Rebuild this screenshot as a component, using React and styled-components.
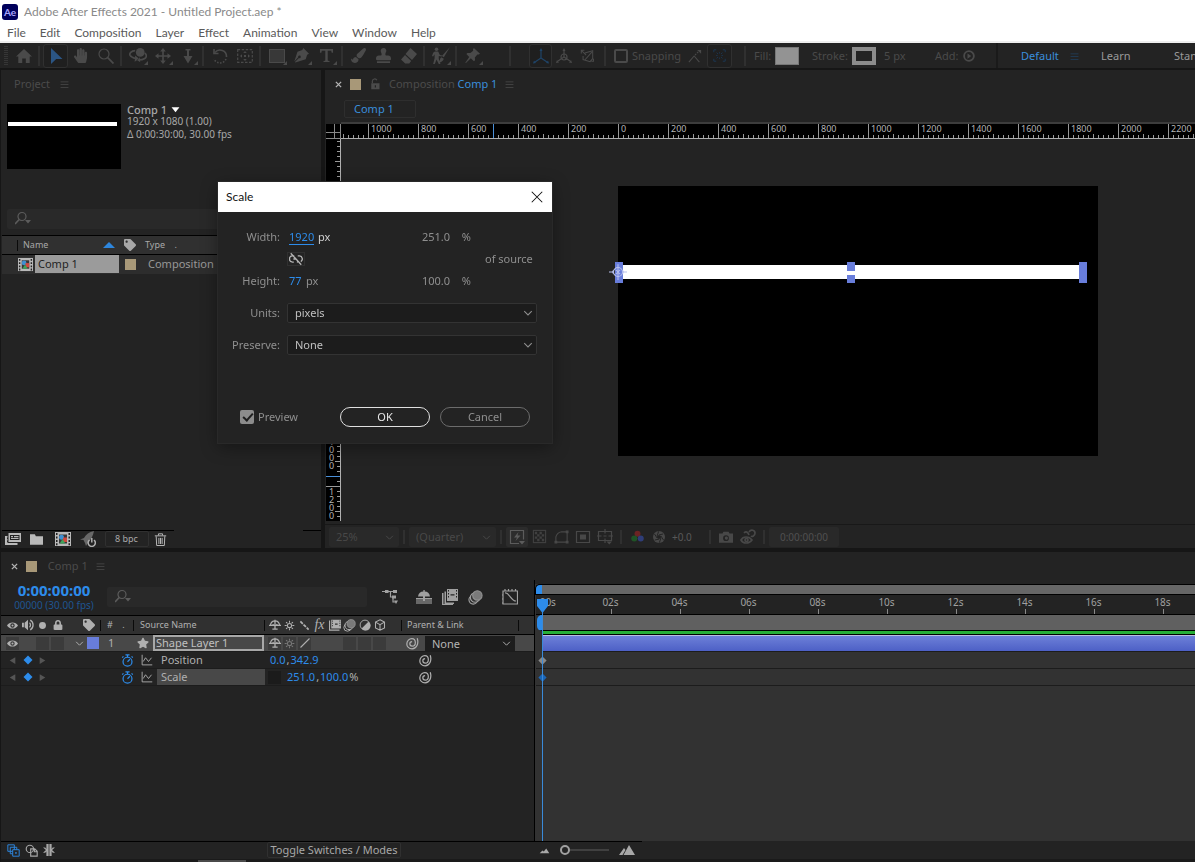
import React from 'react';
import styled, { createGlobalStyle } from 'styled-components';
import { FaHandPaper, FaStamp, FaPaintBrush, FaTag, FaLock, FaStar } from 'react-icons/fa';

const GlobalStyle = createGlobalStyle`
  * { box-sizing: border-box; }

  body {
    margin: 0;
    background: #161616;
    color: #8f8f8f;
    font-family: 'Noto Sans', 'Open Sans', sans-serif;
    font-size: 11px;
    line-height: 16px;
    overflow: hidden;
  }

  button, input, select {
    font: inherit;
    color: inherit;
    margin: 0;
    padding: 0;
    border: 0;
    background: none;
    outline: 0;
  }

  svg { display: block; flex-shrink: 0; }
`;

/* Icons :: 16 x 16 grid */
const line = { fill: 'none', stroke: 'currentColor', strokeWidth: 1.2 };

const icons = {
  home: <path d="M8 1 16 8.500h-2.300V15H9.800v-4.500H6.200V15H2.300V8.500H0z" />,
  select: <path d="M3 0 14.500 11H8.200L3 16z" />,
  zoom: <g {...line}><circle cx="6" cy="6" r="5" /><path d="m9.700 9.700 5.800 5.800" strokeWidth="1.800" /></g>,
  orbit: (
    <g>
      <g {...line} strokeWidth="1.500"><path d="M5.500 3.300C2 3.500 0 5.500 1 7.500c.7 1.300 2.500 2.200 5 2.700M14 5.500c2 1.500 1.800 3.500 0 4.700-1.500 1-3.500 1.300-5.500 1.300" /></g>
      <circle cx="10" cy="4.800" r="3.900" /><path d="m5.500 7.500 3.500 2.900-4 2.800zM9.500 9l-2.500 2.500 3 2z" />
    </g>
  ),
  pan: <path d="m8 0 2.800 3.500H8.800v3.700h3.700V5.200L16 8l-3.500 2.800V8.800H8.800v3.700h2L8 16l-2.800-3.500h2V8.800H3.500v2L0 8l3.500-2.800v2h3.700V3.500h-2z" />,
  dolly: <path d="M5.500 1h5v1.500H9V8h3.500L8 15.500 3.500 8H7V2.500H5.500z" />,
  rotate: (
    <g {...line} strokeWidth="1.600">
      <path d="M3 4.500A6.500 6.500 0 0 1 14.500 9" /><path d="M14 11A6.500 6.500 0 0 1 2 11" strokeDasharray="1.500 1.500" /><path d="M2 1v4.500h4.500" />
    </g>
  ),
  anchor: (
    <g>
      <rect x="0.700" y="1.700" width="14.600" height="12.600" {...line} strokeDasharray="2.500 1.500" />
      <path d="m8 3 1.800 2H6.200zM8 13l1.800-2H6.200zM3 8l2-1.800v3.600zM13 8l-2-1.800v3.600zM7 7h2v2H7z" />
    </g>
  ),
  rect: <rect x="0.500" y="1.500" width="15" height="13" fill="#383838" stroke="currentColor" />,
  pen: <path d="m10 0 6 6-2 1.200L12.500 12 1.500 15.500 1 15l4.300-4.300a1.400 1.400 0 1 0-.8-.8L.3 14.300 3.700 4 8.800 2.200z" />,
  text: <path d="M1 1h14v4h-1.500L13 2.800H9.300v10.600l2 .6V15H4.700v-1l2-.6V2.800H3L2.500 5H1z" />,
  eraser: <path d="M9.500 0 16 6l-5 6-6.500-6zM4 7l6.200 6-2 2.500h-4L0 11.500z" />,
  roto: (
    <g>
      <circle cx="4" cy="2" r="1.600" /><path d="M2.500 4h3l1.500 3 2 .5-.5 1L6 8v2.500l1.500 4.500H6l-2-4-1.500 4H1l1.300-5V6.500L1 8.500 0 8l1-3zM16 0 10.500 9l-1.700-1zM8.200 9l2.300 1.400c-.5 2-2 3-4.500 3.600 1.400-1.500.5-3.500 2.200-5z" />
    </g>
  ),
  pin: <path d="m9.500 0 6.500 6-1.300 1-1.500-.2L10.500 10l.2 3-1.200 1-3.300-3L1 16l-.7-.2L4.500 9.500 1.500 6.500l1-1.200 3.200.1L8.700 3 8.500 1.200z" />,
  axisLocal: <g {...line}><path d="M8 1.500V10l-6 4M8 10l6 4" /><path d="M6.500 3 8 0l1.500 3zM0 15.500l1-3 2 2.500zM16 15.500l-1-3-2 2.500z" fill="currentColor" stroke="none" /></g>,
  axisWorld: <g {...line}><circle cx="8" cy="9" r="3" /><path d="M8 1.500V9l-6 4M8 9l6 4" /><path d="M6.500 3 8 0l1.500 3zM0 15l1-3 2 2.500zM16 15l-1-3-2 2.500z" fill="currentColor" stroke="none" /></g>,
  axisView: <g {...line}><path d="M5.500 4.500 14.500 2v9M14.500 11l-3 3.500-8-2.500V8M6 12l7.500-8.500M2 2l5 5M1.500 5V1.500H5M13 14h2.500v-3" /></g>,
  snapLine: <g {...line}><path d="m1 15 6-7 6 7" /><path d="m8 7 5-5" strokeDasharray="2 1.200" /><path d="M10.500 1H15v4.500z" fill="currentColor" stroke="none" /></g>,
  snapBox: <g {...line} strokeWidth="1.200"><path d="M1 4V1h3M12 1h3v3M1 12v3h3M12 15h3v-3" /><path d="M4.500 4.500 6 6M11.500 4.500 10 6M4.500 11.500 6 10M11.500 11.500 10 10M4 8h1.500M10.500 8H12M8 4v1.500M8 10.500V12" /></g>,
  play: <g><circle cx="8" cy="8" r="6.500" {...line} strokeWidth="2.400" /><path d="m6 4.500 5 3.500-5 3.500z" /></g>,
  menu: <path d="M1 2.500h14v1.400H1zM1 7.500h14v1.400H1zM1 12.500h14v1.400H1z" />,
  close: <path d="m2 2 12 12M14 2 2 14" {...line} />,
  closeTab: <path d="m2 2 12 12M14 2 2 14" {...line} strokeWidth="3" />,
  lockOpen: <g><path d="M3 7h11v8H3z" /><path d="M4.500 7V4a3.200 3.200 0 0 1 6 -1" {...line} strokeWidth="1.600" /><path d="M7.700 9.500h1.600v3H7.700z" fill="#232323" /></g>,
  search: <g {...line}><circle cx="7" cy="5.500" r="4" /><path d="M4.200 8.500 0 13" strokeWidth="1.600" /><path d="M10 9h6l-3 3.500z" fill="currentColor" stroke="none" /></g>,
  down: <path d="M1 4h14L8 13z" />,
  up: <path d="M0 12 8 4l8 8z" />,
  chevron: <path d="m2 5 6 6 6-6" {...line} strokeWidth="1.700" />,
  comp: (
    <g>
      <path d="M0 1h16v14H0z" fill="#b9b9b9" />
      <path d="M1 2h1.500v2H1zM1 5.500h1.500v2H1zM1 9h1.500v2H1zM1 12.300h1.500v2H1zM13.500 2H15v2h-1.500zM13.500 5.500H15v2h-1.500zM13.500 9H15v2h-1.500zM13.500 12.300H15v2h-1.500z" fill="#232323" />
      <path d="M4 3.500h8v9H4z" fill="#383838" />
      <circle cx="6.500" cy="6.300" r="2.500" fill="#3f8fd0" /><path d="M8 6.500h4v4.500H8z" fill="#d0493f" /><path d="m7.500 8 2.800 4.500H4.700z" fill="#3fa35a" />
    </g>
  ),
  interpret: <g><path d="M3.500 2H16v9H3.500z" /><path d="M5 4h9.500v5H5z" fill="#232323" /><path d="M6 5h2v1.300H6zM9 5h4.500v1.300H9zM6 7h7.500v1H6z" /><path d="M0 5h2.500v1.500H2V8h.5v1.500H2V11h.5v1h10v2H0z" /></g>,
  folder: <path d="M0 1.500h6L7.200 4H16v10.500H0z" />,
  render: <g><path d="M14 0c-5 1-8 3.500-10 7L0 8.500l3.500.5L5 12l1 3 2.500-4C11 8.500 13 5 14 0z" fill="#686868" /><path d="M9.500 9a3.600 3.600 0 1 0 4.500 0M11.800 7v4.500" {...line} stroke="#b0b0b0" strokeWidth="1.500" /></g>,
  trash: <g {...line}><path d="M1 3.500h14M5.500 3V1h5v2M2.700 4l.6 11.400h9.400L13.300 4M6 6v7.500M8 6v7.500M10 6v7.500" /></g>,
  fast: <g {...line}><path d="M10 14.500H1.500v-13h13v9" /><path d="M9.500 3 5 8.500h3L6.500 12l5-5.500H8.500zM10 12h6l-3 3.500z" fill="currentColor" stroke="none" /></g>,
  checker: <g opacity="0.8"><rect x="1.500" y="1.500" width="13" height="13" {...line} /><path d="M3 3h2.500v2.500H3zM8 3h2.500v2.500H8zM5.500 5.500H8V8H5.500zM10.500 5.500H13V8h-2.500zM3 8h2.500v2.500H3zM8 8h2.500v2.500H8zM5.500 10.500H8V13H5.500zM10.500 10.500H13V13h-2.500z" /></g>,
  mask: <g {...line}><path d="M2 14V8.500C3 5 5 3.500 8 3h6v11z" /><path d="M.5 12.500h3v3h-3zM12.500 1.500h3v3h-3zM12.500 12.500h3v3h-3z" fill="currentColor" stroke="none" /></g>,
  region: <g><path d="M1.500 2.500h13v11h-13z" {...line} /><path d="M5 5.500h6v5H5z" /></g>,
  grid: <g {...line}><path d="M1.500 2.500h13v9h-13zM8 0v4.500M8 9.500V14M0 7h4.500M11.500 7H16M6.500 7h3" /><path d="M9.500 12.500H15l-2.700 3z" fill="currentColor" stroke="none" /></g>,
  rgb: <g><circle cx="8" cy="4.500" r="3.700" fill="#6b2424" /><circle cx="4" cy="10.500" r="3.700" fill="#1f5426" /><circle cx="12" cy="10.500" r="3.700" fill="#2f3d78" /></g>,
  aperture: <g><circle cx="8" cy="8" r="8" /><path d="M8 5.200 10.500 6.600v2.800L8 10.800 5.500 9.400V6.600z" fill="#232323" /><path d="M8 5.200 13.500 4M10.500 6.600 14 12M10.500 9.400 8.500 15.500M8 10.800 2.500 12M5.500 9.400 2 4M5.500 6.600 7.500.5" stroke="#232323" strokeWidth="1.300" /></g>,
  camera: <path d="M5 2h6l1 2h4v10.500H0V4h4zM8 6a3.300 3.300 0 1 0 0 6.600A3.300 3.300 0 0 0 8 6zm0 1.500A1.800 1.800 0 1 1 8 11a1.800 1.800 0 0 1 0-3.500z" fillRule="evenodd" />,
  snapshot: <g {...line} strokeWidth="1.700"><path d="M1 11c2-4 8-4 11 0-3 4-9 4-11 0zM4 4c2-2 4-1 5 2M9 3c2-3 6-2 6 1s-3 4-4 3" /><circle cx="6.500" cy="11" r="1.500" /></g>,
  flow: <g><path d="M0 2.500h6M4 2.500h10M8.500 2.500V8h5M11 8v5h2" {...line} /><path d="M3 1h3.500v3H3zM11 1h4v3h-4zM10 6.500h4v3h-4zM12 11.500h4L14 15z" /></g>,
  hide: <g><path d="M0 9.500h16V15H0z" fill="#686868" /><path d="M2 7.500C2.500 4 4.500 2.500 7.400 2.400V1h1.300v1.400C11.500 2.500 13.500 4 14 7.500H9V12H7V7.500zM0 9h16v1H0z" /></g>,
  shy: <g><path d="M2 8C2.500 4.300 4.500 2.500 8 2.500S13.500 4.300 14 8M5.500 8V6.500M10.500 8V6.500M0 8.500h16M8 1v13M4.500 13.500h7" {...line} strokeWidth="1.700" /></g>,
  frames: <g><path d="M5 0h11v12H5z" /><path d="M6 1h1v1.500H6zM6 4h1v1.500H6zM6 7h1v1.500H6zM14 1h1v1.500h-1zM14 4h1v1.500h-1zM14 7h1v1.500h-1zM8.500 5.300h4v1.300h-4z" fill="#232323" /><path d="M0 4h1.500v11H11v1H0zM2.500 2.500H4v11h8V15H2.500z" /></g>,
  blur: <g {...line}><circle cx="5.500" cy="10.500" r="4.500" fill="#232323" /><circle cx="7.500" cy="8" r="5" fill="#333" /><circle cx="10" cy="5.800" r="5" fill="#7a7a7a" stroke="#909090" /></g>,
  graph: <g {...line}><path d="M1 2v13h14.500V2zM3 4c4-1 6 8 11 8" /><path d="M3 0v2M6.500 0v2M10 0v2M13.500 0v2M0 6h1M0 10h1M0 14h1" /></g>,
  eye: <path d="M0 8c3-6 13-6 16 0-3 6-13 6-16 0zm8-3.200a3.200 3.200 0 1 0 0 6.400 3.200 3.200 0 0 0 0-6.400zM8 6.500a1.500 1.500 0 1 1 0 3 1.500 1.500 0 0 1 0-3z" fillRule="evenodd" />,
  speaker: <g><path d="M0 5h2.500V11H0zM3.500 5 8 1v14l-4.500-4z" /><path d="M10 5c1.800 1.500 1.800 4.500 0 6M11 1.500c5 3 5 10 0 13" {...line} strokeWidth="1.700" /></g>,
  dot: <circle cx="8" cy="8" r="5" />,
  sun: <g {...line} strokeWidth="1.500"><circle cx="8" cy="8" r="3" /><path d="M8 1v3M8 12v3M1 8h3M12 8h3M3 3l2 2M11 11l2 2M13 3l-2 2M5 11l-2 2" /></g>,
  quality: <path d="m2 2 12 12" {...line} strokeWidth="2.500" strokeDasharray="5 1.500" />,
  slash: <path d="M2 14 14 2" {...line} strokeWidth="1.500" />,
  film: <g><path d="M0 2h1.500v12H14v1.500H0zM3 1h13v11.500H3z" /><path d="M4 2h1v1.500H4zM4 5h1v1.500H4zM4 8h1v1.500H4zM14 2h1v1.500h-1zM14 5h1v1.500h-1zM14 8h1v1.500h-1zM8 6h3.500v1.500H8z" fill="#303030" /></g>,
  adjust: <g><circle cx="8" cy="8" r="6.500" {...line} /><path d="M3.500 12.500 12.500 3.500A6.500 6.500 0 1 1 3.500 12.500z" /></g>,
  cube: <g {...line} strokeWidth="1.400"><path d="m8 1 6 3.200v7.600L8 15l-6-3.200V4.200zM2 4.200 8 7.500l6-3.300M8 7.500V15" /></g>,
  swirl: <path d="M13.800 1.500C16 8 13 14.500 7.500 14.500c-3.800 0-6.500-2.500-6.500-6S4 2 7.200 2C10 2 11.500 4.300 11.500 7s-1.600 4.200-3.700 4.200S4.700 10 4.700 8.400 5.900 5.700 7.500 5.700" {...line} strokeWidth="1.500" />,
  stopwatch: <g {...line} strokeWidth="1.500"><circle cx="8" cy="9.500" r="5.500" /><path d="M5.500 1h5M8 1v3M13 3l1.500 1.500M8 9.500 11 6.500M3 3 1.500 4.500" /></g>,
  curve: <g {...line}><path d="M1.500 1v13.500H15" /><path d="m3 10 3-5 4 5 4-5" /></g>,
  diamond: <path d="m8 2 6 6-6 6-6-6z" />,
  prev: <path d="M13 2v12L3 8z" />,
  next: <path d="M3 2v12l10-6z" />,
  link: <g {...line} strokeWidth="1.500"><path d="M6 4.500H4A3.500 3.500 0 0 0 4 11.500h1.500M10 4.500h2A3.500 3.500 0 0 1 13.500 11M10 11.500H9M5 8h2.500M2 1.500l12 13" /></g>,
  layers: <g {...line}><path d="M1 1h8v8H1zM4 4h8v8H4z" /><path d="M7 7h8v8H7z" fill="#232323" /><path d="M10 11h2M11 10v2" /></g>,
  modes: <g {...line} strokeWidth="1.400"><circle cx="6" cy="6" r="4.500" /><path d="M7 6h5l3 3v6H7zM11.500 6v3.500H15" /></g>,
  inout: <path d="M4.500 0h3v16h-3zM8.500 0h3v16h-3zM0 4.500 4 8l-4 3.500h3l1.500-2v-3l-1.500-2zM16 4.500 12 8l4 3.500h-3l-1.500-2v-3l1.500-2z" />,
  smallHills: <path d="m1 12 4-4 2 1.500L10.500 5 15 12z" />,
  bigHills: <path d="m0 13 5-7 1.500 2L3.500 13zM4.500 13 10 3l6 10z" />,
  anchorPoint: <g fill="none" stroke="#b9c2ee" strokeWidth="0.900"><circle cx="8" cy="8" r="4" /><path d="M8 1v14M0 8h3l1-1.500M16 8h-3l-1-1.500M3 8l1 1.500M13 8l-1 1.500M6 6l4 4M10 6l-4 4" /></g>,
};

const Icon = ({ name, size = 16 }) => (
  <svg width={size} height={size} viewBox="0 0 16 16" fill="currentColor" aria-hidden="true">
    {icons[name]}
  </svg>
);

/* Frame */
const Page = styled.div`
  display: flex;
  flex-direction: column;
  height: 100vh;
  min-height: 700px;
`;

const TitleBar = styled.header`
  display: flex;
  align-items: center;
  gap: 6px;
  height: 24px;
  padding-left: 2px;
  background: #fff;
  color: #8a8a8a;
  font-family: Lato, 'Noto Sans', sans-serif;
  font-size: 12px;
`;

const Logo = styled.span`
  width: 16px;
  height: 16px;
  border-radius: 3px;
  background: #00005b;
  color: #a9a6ff;
  font-size: 10px;
  font-weight: 700;
  text-align: center;
`;

const MenuBar = styled.nav`
  display: flex;
  gap: 14px;
  height: 19px;
  padding-left: 7px;
  background: #fff;
  border-bottom: 2px solid #eee;

  button {
    height: 18px;
    color: #5a5a5a;
    font-family: Lato, 'Noto Sans', sans-serif;
    font-size: 12px;
  }
`;

const Toolbar = styled.div`
  display: flex;
  align-items: center;
  height: 27px;
  overflow: hidden;
  white-space: nowrap;
  background: #232323;
  border-bottom: 2px solid #161616;
  color: #4a4a4a;
`;

const Grip = styled.span`
  flex-shrink: 0;
  width: 4px;
  height: 20px;
  margin: 0 3px 0 4px;
  background: repeating-linear-gradient(#363636 0 1px, transparent 1px 2px);
`;

const Tool = styled.button`
  position: relative;
  display: flex;
  align-items: center;
  justify-content: center;
  flex-shrink: 0;
  width: ${({ $narrow }) => ($narrow ? 23 : 25)}px;
  height: 24px;
  border: 1px solid ${({ $active }) => ($active ? '#303030' : 'transparent')};
  border-radius: 3px;
  background: ${({ $active }) => ($active ? '#1f1f1f' : 'none')};
  color: ${({ $color = 'inherit' }) => $color};

  &::after {
    content: '';
    display: ${({ $more }) => ($more ? 'block' : 'none')};
    position: absolute;
    right: 1px;
    bottom: 2px;
    border: 2px solid #4a4a4a;
    border-top-color: transparent;
    border-left-color: transparent;
  }
`;

const Divider = styled.span`
  flex-shrink: 0;
  width: 2px;
  height: ${({ $short }) => ($short ? 14 : 20)}px;
  margin: 0 ${({ $side = 3 }) => $side}px 0 ${({ $left = 2 }) => $left}px;
  background: #303030;
`;

const ToolText = styled.label`
  display: flex;
  align-items: center;
  gap: 4px;
  flex-shrink: 0;
  width: ${({ $w }) => $w}px;
  padding-top: 1px;
`;

const Box = styled.input`
  appearance: none;
  width: 14px;
  height: 14px;
  border: 2px solid #4a4a4a;
  border-radius: 2px;
`;

const Swatch = styled.span`
  flex-shrink: 0;
  width: 24px;
  height: 18px;
  background: ${({ $hollow }) => ($hollow ? '#232323' : '#939393')};
  border: ${({ $hollow }) => ($hollow ? '4px solid #8c8c8c' : '1px solid #777')};
`;

const Workspaces = styled.nav`
  display: flex;
  align-items: center;
  align-self: stretch;
  border-left: 2px solid #1a1a1a;
  padding: 1px 0 0 23px;
  color: #9a9a9a;

  a {
    color: inherit;
    text-decoration: none;
  }
  a:first-child { color: #3a8edc; width: 49px; }
  svg { color: #21405f; margin-right: 22px; }
  a:nth-of-type(2) { width: 73px; }
`;

const Workspace = styled.main`
  display: flex;
  flex: 1;
  gap: 4px;
  min-height: 0;
  padding-left: 1px;
`;

const Panel = styled.section`
  display: flex;
  flex-direction: column;
  min-width: 0;
  background: #232323;
`;

const TabBar = styled.header`
  display: flex;
  align-items: center;
  gap: ${({ $gap = 8 }) => $gap}px;
  height: 28px;
  padding-left: ${({ $left = 13 }) => $left}px;
  color: #4b4b4b;
  white-space: nowrap;

  h2 {
    margin: 0;
    font-size: 11px;
    font-weight: 400;
  }
  b {
    color: #3a8edc;
    font-weight: 400;
  }
`;

const TabColor = styled.i`
  width: 11px;
  height: 11px;
  background: #a89878;
`;

const CloseTab = styled.button`
  color: #b5b5b5;
`;

/* Project panel */
const ProjectPanel = styled(Panel)`
  width: 320px;
  flex-shrink: 0;
`;

const Summary = styled.div`
  display: flex;
  gap: 6px;
  padding: 5px 0 0 6px;
  line-height: 13px;
  color: #a8a8a8;
  font-size: 10px;

  p { margin: 0; }
  strong {
    display: flex;
    align-items: center;
    gap: 4px;
    height: 12px;
    font-size: 11px;
    font-weight: 500;
  }
  svg { color: #fff; }
`;

const Thumb = styled.div`
  width: 114px;
  height: 65px;
  margin-top: 1px;
  padding: 18px 4px 0 1px;
  background: #000;

  &::before {
    content: '';
    display: block;
    height: 4px;
    background: #fff;
  }
`;

const Search = styled.label`
  display: flex;
  align-items: center;
  width: ${({ $w = 'auto' }) => $w};
  height: 20px;
  margin: ${({ $margin }) => $margin};
  padding-left: 8px;
  border-radius: 2px;
  background: #292929;
  color: #5c5c5c;

  input { width: 100%; padding-left: 4px; }
`;

const ItemTable = styled.table`
  width: 319px;
  margin-left: 1px;
  border-collapse: collapse;
  table-layout: fixed;
  color: #989898;

  th, td {
    height: 19px;
    padding: 0 0 0 6px;
    text-align: left;
    font-weight: 400;
    font-size: 11px;
    line-height: 16px;
  }
  th {
    font-size: 9px;
    background: #303030;
    border-top: 1px solid #000;
    border-bottom: 1px solid #000;
    color: #a8a8a8;
  }
  th:first-child { width: 117px; padding-left: 15px; }
  th:nth-child(2) { width: 20px; padding-left: 5px; }
  td { background: #2d2d2d; }
  td:last-child { padding-left: 9px; }
  th > div {
    display: flex;
    align-items: center;
    justify-content: space-between;
    padding-right: 4px;
  }
`;

const SortName = styled.span`
  flex: 1;
  padding-left: 5px;

  & + svg { color: #2d86dd; }
`;

const Bar = styled.i`
  display: block;
  width: 1px;
  height: 11px;
  background: #0a0a0a;
`;

const ItemName = styled.div`
  display: flex;
  align-items: center;
  margin-left: 10px;
  height: 18px;

  span {
    flex: 1;
    margin-left: 2px;
    padding-left: 3px;
    line-height: 18px;
    background: #9b9b9b;
    color: #1f1f1f;
  }
`;

const LabelColor = styled.i`
  display: block;
  width: ${({ $size = 11 }) => $size}px;
  height: ${({ $size = 11 }) => $size}px;
  background: ${({ $color = '#a89878' }) => $color};
`;

const ProjectFooter = styled.footer`
  display: flex;
  align-items: center;
  height: 18px;
  margin-top: auto;
  margin-left: 1px;
  padding-left: 3px;
  color: #b9b9b9;
  background: linear-gradient(90deg, #000 0 172px, transparent 172px 301px, #000 301px) 0 0 / 100% 1px no-repeat;

  button {
    display: flex;
    align-items: center;
    width: 25px;
    height: 16px;
  }
  button:nth-child(5) {
    width: 44px;
    padding-left: 9px;
    margin-right: 5px;
    border: 1px solid #303030;
    border-radius: 2px;
    font-size: 9px;
    color: #a8a8a8;
  }
`;

/* Composition panel */
const CompPanel = styled(Panel)`
  flex: 1;
`;

const CompTab = styled.button`
  width: 72px;
  height: 18px;
  margin: 2px 0 4px 19px;
  padding-left: 9px;
  border: 1px solid #2e2e2e;
  border-radius: 2px;
  color: #3a8edc;
  text-align: left;
`;

const Viewer = styled.div`
  display: grid;
  grid-template: 17px 1fr / 15px 1fr;
  flex: 1;
  min-height: 0;
  margin-left: 1px;
  overflow: hidden;
`;

const Corner = styled.div`
  margin-top: 2px;
  border-right: 1px solid #888;
  border-bottom: 1px solid #888;
  background:
    linear-gradient(#888, #888) 8px 0 / 1px 100% no-repeat,
    linear-gradient(#888, #888) 0 8px / 100% 1px no-repeat,
    #000;
`;

const RulerX = styled.div`
  display: flex;
  padding-left: 27px;
  border-top: 2px solid #3c3c3c;
  border-bottom: 1px solid #b0b0b0;
  overflow: hidden;
  background:
    linear-gradient(90deg, #4a90d9, #4a90d9) 152px 0 / 1px 100% no-repeat,
    repeating-linear-gradient(90deg, #999 0 1px, transparent 1px 25px) 2px 10px / 100% 4px no-repeat,
    repeating-linear-gradient(90deg, #999 0 1px, transparent 1px 5px) 2px 11px / 100% 3px no-repeat,
    #000;

  span {
    flex: 0 0 50px;
    height: 14px;
    padding-left: 2px;
    border-left: 1px solid #999;
    color: #b5b5b5;
    font-size: 9px;
    line-height: 10px;
  }
`;

const RulerY = styled.div`
  height: 382px;
  padding-top: 47px;
  border-right: 1px solid #b0b0b0;
  overflow: hidden;
  background:
    linear-gradient(#4a90d9, #4a90d9) 0 337px / 100% 1px no-repeat,
    repeating-linear-gradient(#999 0 1px, transparent 1px 25px) 9px 22px / 5px 100% no-repeat,
    repeating-linear-gradient(#999 0 1px, transparent 1px 5px) 11px 2px / 3px 100% no-repeat,
    #000;

  span {
    display: block;
    width: 14px;
    height: 50px;
    padding: 1px 5px 0 3px;
    border-top: 1px solid #999;
    color: #b5b5b5;
    font-size: 9px;
    line-height: 8px;
    word-break: break-all;
  }
  span:last-child { height: 35px; }
`;

const Stage = styled.div`
  padding: 47px 0 0 277px;
`;

const Frame = styled.div`
  position: relative;
  width: 480px;
  height: 270px;
  background: #000;
`;

const ShapeBar = styled.div`
  position: absolute;
  left: 0;
  top: 79px;
  width: 465px;
  height: 14px;
  background: #fff;
`;

const Handle = styled.i`
  position: absolute;
  left: ${({ $x }) => $x}px;
  top: ${({ $y }) => $y}px;
  width: 8px;
  height: ${({ $h }) => $h}px;
  background: #687ddb;
`;

const AnchorMark = styled.span`
  position: absolute;
  left: -9px;
  top: 77px;
`;

const ViewerFooter = styled.footer`
  display: flex;
  align-items: center;
  height: 24px;
  padding: 0 0 0 4px;
  border-top: 1px solid #181818;
  color: #484848;
  white-space: nowrap;
`;

const DimSelect = styled.span`
  position: relative;
  width: ${({ $w }) => $w}px;

  select {
    appearance: none;
    display: block;
    width: 100%;
    height: 20px;
    padding-left: 7px;
    background: #292929;
    border-radius: 2px;
  }
  svg {
    position: absolute;
    right: 5px;
    top: 6px;
    pointer-events: none;
  }
`;

const ViewTool = styled.button`
  display: flex;
  align-items: center;
  justify-content: center;
  width: 22px;
  height: 20px;
  border-radius: 2px;
  background: ${({ $on }) => ($on ? '#2c2c2c' : 'none')};
  color: ${({ $on }) => ($on ? '#5c5c5c' : 'inherit')};
`;

const Exposure = styled.span`
  width: 35px;
  padding-left: 2px;
  color: #585858;
  font-size: 10px;
`;

const TimeBox = styled.button`
  height: 20px;
  width: 70px;
  border-radius: 2px;
  background: #292929;
  color: #505050;
  font-size: 10px;
`;

/* Timeline */
const Timeline = styled(Panel)`
  flex-shrink: 0;
  height: 310px;
  margin: 4px 0 0 1px;
`;

const Split = styled.div`
  display: grid;
  grid-template-columns: 534px 1fr;
  flex: 1;
  min-height: 0;
`;

const LayerSide = styled.div`
  border-right: 1px solid #000;
`;

const TimeHead = styled.div`
  display: flex;
  height: 35px;
  color: #a0a0a0;
`;

const TimeCode = styled.div`
  width: 106px;
  padding-top: 3px;
  color: #1f5590;
  font-size: 10px;
  line-height: 15px;
  text-align: center;

  strong {
    display: block;
    color: #2d8ceb;
    font-size: 15px;
    line-height: 15px;
  }
`;

const HeadTools = styled.div`
  display: flex;
  gap: 10px;
  padding: 9px 0 0 15px;

  button { height: 16px; }
  button:nth-child(1) { margin-right: 8px; }
  button:nth-child(4) { margin-right: 9px; }
`;

const Row = styled.div`
  display: grid;
  grid-template-columns: 60px 36px 33px 131px 137px 117px 1fr;
  align-items: center;
  height: 17px;
  padding-left: 4px;
  border-bottom: 1px solid ${({ $head }) => ($head ? '#000' : '#1c1c1c')};
  color: #b0b0b0;
  line-height: 16px;
  white-space: nowrap;
  background: ${({ $head, $selected }) => ($head ? '#303030' : $selected ? '#484848' : '#232323')};
  ${({ $head }) => $head && 'height: 20px; border-top: 1px solid #000; font-size: 9px;'}
`;

const Cell = styled.div`
  display: flex;
  align-items: center;
  gap: ${({ $gap = 0 }) => $gap}px;
  justify-content: ${({ $end }) => ($end ? 'flex-end' : 'flex-start')};
  height: 16px;
  padding: 0 ${({ $right = 0 }) => $right}px 0 ${({ $left = 0 }) => $left}px;
  ${({ $rule }) => $rule && 'background: linear-gradient(#0a0a0a, #0a0a0a) 100% 3px / 1px 11px no-repeat;'}
`;

const Slot = styled.button`
  display: flex;
  align-items: center;
  justify-content: center;
  flex-shrink: 0;
  width: ${({ $tight }) => ($tight ? 13 : 15)}px;
  height: 15px;
  border: 1px solid transparent;
  background: ${({ $box }) => $box || 'none'};
  background-clip: padding-box;
  color: ${({ $color = 'inherit' }) => $color};
`;

const Fx = styled.em`
  width: 15px;
  font-family: 'Liberation Serif', serif;
  font-size: 14px;
  text-align: center;
`;

const LayerName = styled.button`
  flex: 1;
  height: 16px;
  margin-left: 4px;
  padding-left: 1px;
  border: 2px solid #a8a8a8;
  color: #c0c0c0;
  line-height: 12px;
  text-align: left;
`;

const PropName = styled.span`
  flex: 1;
  margin-left: 4px;
  padding-left: 4px;
  line-height: 16px;
  background: ${({ $on }) => ($on ? '#484848' : 'none')};
`;

const HotText = styled.button`
  color: #2d8ceb;
`;

const Values = styled.span`
  display: flex;
  gap: 1px;
  margin-left: 5px;
`;

const ParentSelect = styled.span`
  position: relative;
  width: 90px;
  height: 15px;

  select {
    appearance: none;
    display: block;
    width: 100%;
    height: 15px;
    padding-left: 7px;
    background: #1d1d1d;
    color: #b5b5b5;
    line-height: 15px;
  }
  svg {
    position: absolute;
    right: 4px;
    top: 3px;
    pointer-events: none;
  }
`;

const TrackSide = styled.div`
  position: relative;
  display: flex;
  flex-direction: column;
  margin-top: 4px;
  padding-left: 1px;
  overflow: hidden;
  background: #323232;
`;

const Navigator = styled.div`
  height: 11px;
  margin-left: -1px;
  border: 1px solid #000;
  border-right: 0;
  background: linear-gradient(90deg, #2d8ceb 0 6px, #666 6px);
  border-radius: 5px 0 0 0;
`;

const TimeRuler = styled.div`
  display: flex;
  height: 20px;
  background: #232323;
  border-bottom: 1px solid #000;

  span {
    flex: 0 0 69px;
    color: #a0a0a0;
    font-size: 10px;
    line-height: 15px;
    text-align: center;
    background: linear-gradient(#8a8a8a, #8a8a8a) 35px 14px / 1px 5px no-repeat;
  }
  span:first-child {
    flex-basis: 40px;
    padding-left: 1px;
    text-align: left;
    background-position: 6px 14px;
  }
`;

const WorkArea = styled.div`
  height: 16px;
  margin-left: 1px;
  border-left: 5px solid #2d8ceb;
  border-radius: 5px 0 0 5px;
  border-bottom: 1px solid #000;
  background: #606060;
`;

const Cache = styled.div`
  height: 4px;
  margin-left: 6px;
  background: #27ae37;
  border-bottom: 1px solid #000;
`;

const LayerBar = styled.div`
  height: 17px;
  margin-left: 6px;
  border-top: 1px solid #b9bfe0;
  border-bottom: 1px solid #1c1c1c;
  background: linear-gradient(#6d80d8, #4d60c6);
`;

const KeyLane = styled.div`
  height: 17px;
  padding: 3px 0 0 1px;
  border-bottom: 1px solid #1c1c1c;
  color: ${({ $on }) => ($on ? '#1a66b8' : '#8a8a8a')};
`;

const Playhead = styled.div`
  position: absolute;
  left: 2px;
  top: 15px;
  bottom: 0;
  width: 11px;
  background: linear-gradient(#3a8ad8, #3a8ad8) 5px 8px / 1px 100% no-repeat;

  &::before {
    content: '';
    display: block;
    height: 14px;
    background: #2d8ceb;
    clip-path: polygon(0 0, 100% 0, 100% 50%, 50% 100%, 0 50%);
  }
`;

const TimelineFooter = styled.footer`
  display: flex;
  align-items: center;
  height: 18px;
  padding-left: 6px;
  color: #a8a8a8;
  background: linear-gradient(#000, #000) 0 0 / 641px 1px no-repeat;

  > button {
    display: flex;
    width: 18px;
  }
  > button:first-child { color: #2d86dd; }
`;

const FooterLeft = styled.div`
  display: flex;
  justify-content: flex-end;
  width: 340px;
`;

const ToggleButton = styled.button`
  height: 16px;
  width: 134px;
  border: 1px solid #303030;
  border-radius: 2px;
  line-height: 14px;
`;

const ZoomGroup = styled.div`
  display: flex;
  align-items: center;
  gap: 10px;
  margin-left: 138px;
`;

const ZoomRange = styled.input`
  appearance: none;
  width: 49px;
  height: 12px;
  background: linear-gradient(#404040, #404040) 0 5px / 100% 2px no-repeat;

  &::-webkit-slider-thumb {
    appearance: none;
    width: 10px;
    height: 10px;
    border: 2px solid #a0a0a0;
    border-radius: 50%;
    background: #232323;
  }
`;

const Scroller = styled.div`
  height: 3px;
  background: linear-gradient(#4a4a4a, #4a4a4a) 197px 1px / 48px 2px no-repeat, #1a1a1a;
`;

/* Scale dialog */
const DialogBox = styled.div`
  position: fixed;
  left: 218px;
  top: 182px;
  width: 334px;
  background: #232323;
  box-shadow: 0 0 0 1px #292929, 0 4px 16px rgba(0, 0, 0, 0.4);
`;

const DialogTitle = styled.header`
  display: flex;
  align-items: center;
  justify-content: space-between;
  height: 30px;
  padding: 0 8px;
  background: #fff;
  color: #111;

  h1 {
    margin: 0;
    font-family: Lato, 'Noto Sans', sans-serif;
    font-size: 12px;
    font-weight: 400;
  }
`;

const Fields = styled.div`
  display: grid;
  grid-template-columns: 62px 136px 36px 22px 1fr;
  grid-auto-rows: 22px;
  align-items: center;
  padding-top: 14px;

  > label { text-align: right; }
`;

const Size = styled.span`
  display: flex;
  align-items: center;
  gap: 4px;
  padding-left: 9px;
  color: ${({ $focus }) => ($focus ? '#d0d0d0' : 'inherit')};

  input {
    width: ${({ $w }) => $w}px;
    height: 15px;
    color: #2d8ceb;
    border-bottom: 1px solid ${({ $focus }) => ($focus ? '#2d8ceb' : 'transparent')};
  }
`;

const LinkButton = styled.button`
  grid-column: 2;
  width: 18px;
  height: 14px;
  margin-left: 7px;
  display: flex;
  align-items: center;
  justify-content: center;
  border: 1px solid #303030;
  color: #b5b5b5;
`;

const Source = styled.span`
  grid-column: 5;
  padding-left: 11px;
`;

const Percent = styled.input`
  width: 36px;
  text-align: right;
  padding-right: 2px;
`;

const PercentSign = styled.span`
  text-align: right;
  padding-right: 3px;
`;

const Picks = styled.div`
  display: grid;
  grid-template-columns: 62px 250px;
  column-gap: 7px;
  row-gap: 12px;
  align-items: center;
  padding-top: 11px;

  > label { text-align: right; }
`;

const SelectBox = styled.span`
  position: relative;

  select {
    appearance: none;
    display: block;
    width: 100%;
    height: 20px;
    padding-left: 7px;
    border: 1px solid #333;
    border-radius: 2px;
    background: #1c1c1c;
    color: #c0c0c0;
  }
  svg {
    position: absolute;
    right: 4px;
    top: 5px;
    pointer-events: none;
  }
`;

const Actions = styled.div`
  display: flex;
  align-items: center;
  gap: 10px;
  padding: 52px 22px 16px;
`;

const PreviewCheck = styled.label`
  display: flex;
  align-items: center;
  gap: 4px;
  flex: 1;

  input {
    appearance: none;
    width: 14px;
    height: 14px;
    border-radius: 2px;
    background: #8c8c8c;
  }
  input:checked::after {
    content: '';
    display: block;
    width: 4px;
    height: 8px;
    margin: 1px 5px;
    border: solid #1f1f1f;
    border-width: 0 2px 2px 0;
    transform: rotate(42deg);
  }
`;

const PillButton = styled.button`
  width: 90px;
  height: 20px;
  border: ${({ $primary }) => ($primary ? '1px solid #e0e0e0' : '1px solid #6c6c6c')};
  border-radius: 10px;
  color: ${({ $primary }) => ($primary ? '#e8e8e8' : '#8f8f8f')};
`;

const menus = ['File', 'Edit', 'Composition', 'Layer', 'Effect', 'Animation', 'View', 'Window', 'Help'];
const xMarks = [1000, 800, 600, 400, 200, 0, 200, 400, 600, 800, 1000, 1200, 1400, 1600, 1800, 2000, 2200];
const yMarks = [0, 200, 400, 600, 800, 1000, 1200];
const seconds = [':00s', '02s', '04s', '06s', '08s', '10s', '12s', '14s', '16s', '18s'];

const Tools = () => (
  <Toolbar>
    <Grip />
    <Tool aria-label="Home"><Icon name="home" /></Tool>
    <Divider />
    <Tool $active $color="#2b5584" aria-label="Selection"><Icon name="select" /></Tool>
    <Tool aria-label="Hand"><FaHandPaper size={15} /></Tool>
    <Tool aria-label="Zoom"><Icon name="zoom" /></Tool>
    <Divider />
    <Tool $more aria-label="Orbit"><Icon name="orbit" size={18} /></Tool>
    <Tool $more aria-label="Pan"><Icon name="pan" /></Tool>
    <Tool $more aria-label="Dolly"><Icon name="dolly" /></Tool>
    <Divider />
    <Tool aria-label="Rotation"><Icon name="rotate" /></Tool>
    <Tool aria-label="Pan behind"><Icon name="anchor" /></Tool>
    <Divider />
    <Tool $more aria-label="Rectangle"><Icon name="rect" /></Tool>
    <Tool $more aria-label="Pen"><Icon name="pen" size={15} /></Tool>
    <Tool $more aria-label="Type"><Icon name="text" size={15} /></Tool>
    <Divider />
    <Tool aria-label="Brush"><FaPaintBrush size={15} /></Tool>
    <Tool aria-label="Clone stamp"><FaStamp size={15} /></Tool>
    <Tool aria-label="Eraser"><Icon name="eraser" /></Tool>
    <Divider />
    <Tool $more aria-label="Roto brush"><Icon name="roto" size={18} /></Tool>
    <Divider />
    <Tool $more aria-label="Puppet pin"><Icon name="pin" size={15} /></Tool>
    <Divider $left={24} $side={18} />
    <Tool $narrow $active $color="#1f4468" aria-label="Local axis"><Icon name="axisLocal" /></Tool>
    <Tool $narrow aria-label="World axis"><Icon name="axisWorld" /></Tool>
    <Tool $narrow aria-label="View axis"><Icon name="axisView" size={14} /></Tool>
    <Divider $left={6} $side={8} />
    <ToolText $w={68}><Box type="checkbox" />Snapping</ToolText>
    <Tool aria-label="Snap to edges"><Icon name="snapLine" size={14} /></Tool>
    <Tool $active $color="#1c3854" aria-label="Snap to features"><Icon name="snapBox" size={13} /></Tool>
    <Divider $left={12} $side={8} />
    <ToolText as="span" $w={58}>Fill:<Swatch /></ToolText>
    <ToolText as="span" $w={72}>Stroke:<Swatch $hollow /></ToolText>
    <ToolText as="span" $w={51}>5 px</ToolText>
    <ToolText as="span" $w={61}>Add:<Icon name="play" size={12} /></ToolText>
    <Workspaces>
      <a href="#default">Default</a>
      <Icon name="menu" size={9} />
      <a href="#learn">Learn</a>
      <a href="#standard">Standard</a>
    </Workspaces>
  </Toolbar>
);

const Project = () => (
  <ProjectPanel>
    <TabBar $gap={10}>
      <h2>Project</h2>
      <Icon name="menu" size={9} />
    </TabBar>
    <Summary>
      <Thumb />
      <div>
        <strong>Comp 1 <Icon name="down" size={9} /></strong>
        <p>1920 x 1080 (1.00)</p>
        <p>Δ 0:00:30:00, 30.00 fps</p>
      </div>
    </Summary>
    <Search $margin="40px 4px 6px 6px">
      <Icon name="search" />
      <input aria-label="Search project" />
    </Search>
    <ItemTable>
      <thead>
        <tr>
          <th>
            <div><Bar /><SortName>Name</SortName><Icon name="up" size={12} /></div>
          </th>
          <th aria-label="Label"><FaTag size={12} /></th>
          <th><div><span>Type &nbsp; &nbsp;.</span><Bar /></div></th>
        </tr>
      </thead>
      <tbody>
        <tr>
          <td><ItemName><Icon name="comp" size={15} /><span>Comp 1</span></ItemName></td>
          <td><LabelColor /></td>
          <td>Composition</td>
        </tr>
      </tbody>
    </ItemTable>
    <ProjectFooter>
      <button aria-label="Interpret footage"><Icon name="interpret" /></button>
      <button aria-label="New folder"><Icon name="folder" size={13} /></button>
      <button aria-label="New composition"><Icon name="comp" /></button>
      <button aria-label="Project settings"><Icon name="render" /></button>
      <button>8 bpc</button>
      <button aria-label="Delete"><Icon name="trash" size={13} /></button>
    </ProjectFooter>
  </ProjectPanel>
);

const Composition = () => (
  <CompPanel>
    <TabBar $left={10}>
      <CloseTab aria-label="Close tab"><Icon name="closeTab" size={7} /></CloseTab>
      <TabColor />
      <Icon name="lockOpen" size={12} />
      <h2>Composition <b>Comp 1</b></h2>
      <Icon name="menu" size={9} />
    </TabBar>
    <CompTab>Comp 1</CompTab>
    <Viewer>
      <Corner />
      <RulerX>{xMarks.map((n, i) => <span key={i}>{n}</span>)}</RulerX>
      <RulerY>{yMarks.map((n) => <span key={n}>{n}</span>)}</RulerY>
      <Stage>
        <Frame>
          <ShapeBar />
          <Handle $x={-3} $y={76} $h={21} />
          <Handle $x={229} $y={76} $h={9} />
          <Handle $x={229} $y={89} $h={8} />
          <Handle $x={461} $y={76} $h={21} />
          <AnchorMark><Icon name="anchorPoint" size={18} /></AnchorMark>
        </Frame>
      </Stage>
    </Viewer>
    <ViewerFooter>
      <DimSelect $w={70}>
        <select aria-label="Magnification"><option>25%</option></select>
        <Icon name="chevron" size={9} />
      </DimSelect>
      <Divider $short $left={4} $side={4} />
      <DimSelect $w={87}>
        <select aria-label="Resolution"><option>(Quarter)</option></select>
        <Icon name="chevron" size={9} />
      </DimSelect>
      <Divider $short $left={4} $side={4} />
      <ViewTool $on aria-label="Fast previews"><Icon name="fast" /></ViewTool>
      <ViewTool aria-label="Transparency grid"><Icon name="checker" size={15} /></ViewTool>
      <ViewTool aria-label="Mask visibility"><Icon name="mask" size={15} /></ViewTool>
      <ViewTool aria-label="Region of interest"><Icon name="region" /></ViewTool>
      <ViewTool aria-label="Guides"><Icon name="grid" /></ViewTool>
      <Divider $short $left={4} $side={4} />
      <ViewTool aria-label="Channels"><Icon name="rgb" size={13} /></ViewTool>
      <ViewTool aria-label="Reset exposure"><Icon name="aperture" size={12} /></ViewTool>
      <Exposure>+0.0</Exposure>
      <Divider $short $left={4} $side={4} />
      <ViewTool aria-label="Take snapshot"><Icon name="camera" size={14} /></ViewTool>
      <ViewTool aria-label="Show snapshot"><Icon name="snapshot" /></ViewTool>
      <Divider $short $left={4} $side={4} />
      <TimeBox>0:00:00:00</TimeBox>
    </ViewerFooter>
  </CompPanel>
);

const Property = ({ name, selected, children }) => (
  <Row>
    <Cell>
      <Slot $color="#555" aria-label="Previous keyframe"><Icon name="prev" size={9} /></Slot>
      <Slot $color="#2d8ceb" aria-label="Toggle keyframe"><Icon name="diamond" size={12} /></Slot>
      <Slot $color="#555" aria-label="Next keyframe"><Icon name="next" size={9} /></Slot>
    </Cell>
    <span />
    <Cell $end>
      <Slot $tight $color="#2d8ceb" aria-label="Stopwatch"><Icon name="stopwatch" size={13} /></Slot>
    </Cell>
    <Cell $left={7}>
      <Icon name="curve" size={12} />
      <PropName $on={selected}>{name}</PropName>
    </Cell>
    <Cell $left={selected ? 2 : 0}>
      {selected && <Slot $box="#1b1b1b" aria-label="Constrain proportions" />}
      <Values>{children}</Values>
    </Cell>
    <Cell $left={16}><Slot aria-label="Pick whip"><Icon name="swirl" size={13} /></Slot></Cell>
  </Row>
);

const TimelinePanel = () => (
  <Timeline>
    <TabBar $left={10}>
      <CloseTab aria-label="Close tab"><Icon name="closeTab" size={7} /></CloseTab>
      <TabColor />
      <h2>&nbsp;Comp 1</h2>
      <Icon name="menu" size={9} />
    </TabBar>
    <Split>
      <LayerSide>
        <TimeHead>
          <TimeCode><strong>0:00:00:00</strong>00000 (30.00 fps)</TimeCode>
          <Search $w="260px" $margin="7px 0 0">
            <Icon name="search" />
            <input aria-label="Search layers" />
          </Search>
          <HeadTools>
            <button aria-label="Mini flowchart"><Icon name="flow" /></button>
            <button aria-label="Hide shy layers"><Icon name="hide" /></button>
            <button aria-label="Frame blending"><Icon name="frames" /></button>
            <button aria-label="Motion blur"><Icon name="blur" size={15} /></button>
            <button aria-label="Graph editor"><Icon name="graph" /></button>
          </HeadTools>
        </TimeHead>
        <Row $head>
          <Cell>
            <Slot aria-label="Video"><Icon name="eye" size={11} /></Slot>
            <Slot aria-label="Audio"><Icon name="speaker" size={12} /></Slot>
            <Slot aria-label="Solo"><Icon name="dot" size={11} /></Slot>
            <Slot aria-label="Lock"><FaLock size={10} /></Slot>
          </Cell>
          <Cell $rule $end $right={6}><FaTag size={12} /></Cell>
          <Cell $rule $left={6}># &nbsp; &nbsp;.</Cell>
          <Cell $rule $left={6}>Source Name</Cell>
          <Cell $rule $left={2}>
            <Slot><Icon name="shy" size={12} /></Slot>
            <Slot><Icon name="sun" size={11} /></Slot>
            <Slot><Icon name="quality" size={11} /></Slot>
            <Fx>fx</Fx>
            <Slot><Icon name="film" size={12} /></Slot>
            <Slot><Icon name="blur" size={13} /></Slot>
            <Slot><Icon name="adjust" size={12} /></Slot>
            <Slot><Icon name="cube" size={12} /></Slot>
          </Cell>
          <Cell $rule $left={5}>Parent &amp; Link</Cell>
        </Row>
        <Row $selected>
          <Cell>
            <Slot $box="#3b3b3b" aria-label="Visible"><Icon name="eye" size={11} /></Slot>
            <Slot aria-label="Audio" />
            <Slot $box="#3b3b3b" aria-label="Solo" />
            <Slot $box="#3b3b3b" aria-label="Lock" />
          </Cell>
          <Cell $end $right={2} $gap={3}>
            <Icon name="chevron" size={9} />
            <LabelColor $size={12} $color="#687ddb" />
          </Cell>
          <Cell $left={7}>1</Cell>
          <Cell $left={3} $right={1}>
            <FaStar size={12} />
            <LayerName>Shape Layer 1</LayerName>
          </Cell>
          <Cell $left={2}>
            <Slot $box="#3b3b3b" aria-label="Shy"><Icon name="shy" size={12} /></Slot>
            <Slot $box="#3b3b3b" $color="#777" aria-label="Collapse"><Icon name="sun" size={11} /></Slot>
            <Slot $box="#3b3b3b" aria-label="Quality"><Icon name="slash" size={12} /></Slot>
            <Slot aria-label="Effects" />
            <Slot aria-label="Frame blend" />
            <Slot $box="#3b3b3b" aria-label="Motion blur" />
            <Slot $box="#3b3b3b" aria-label="Adjustment" />
            <Slot $box="#3b3b3b" aria-label="3D layer" />
          </Cell>
          <Cell $left={3} $gap={5}>
            <Slot aria-label="Pick whip"><Icon name="swirl" size={13} /></Slot>
            <ParentSelect>
              <select aria-label="Parent"><option>None</option></select>
              <Icon name="chevron" size={9} />
            </ParentSelect>
          </Cell>
        </Row>
        <Property name="Position"><HotText>0.0</HotText>,<HotText>342.9</HotText></Property>
        <Property name="Scale" selected><HotText>251.0</HotText>,<HotText>100.0</HotText>%</Property>
      </LayerSide>
      <TrackSide>
        <Navigator />
        <TimeRuler>{seconds.map((s) => <span key={s}>{s}</span>)}</TimeRuler>
        <WorkArea />
        <Cache />
        <LayerBar />
        <KeyLane><Icon name="diamond" size={11} /></KeyLane>
        <KeyLane $on><Icon name="diamond" size={11} /></KeyLane>
        <Playhead />
      </TrackSide>
    </Split>
    <TimelineFooter>
      <button aria-label="Layer switches"><Icon name="layers" size={13} /></button>
      <button aria-label="Transfer controls"><Icon name="modes" size={13} /></button>
      <button aria-label="In and out"><Icon name="inout" size={12} /></button>
      <FooterLeft><ToggleButton>Toggle Switches / Modes</ToggleButton></FooterLeft>
      <ZoomGroup>
        <Icon name="smallHills" size={11} />
        <ZoomRange type="range" min="0" max="100" defaultValue="0" aria-label="Timeline zoom" />
        <Icon name="bigHills" />
      </ZoomGroup>
    </TimelineFooter>
    <Scroller />
  </Timeline>
);

const ScaleDialog = () => (
  <DialogBox role="dialog" aria-label="Scale">
    <DialogTitle>
      <h1>Scale</h1>
      <button aria-label="Close"><Icon name="close" size={14} /></button>
    </DialogTitle>
    <Fields>
      <label htmlFor="width">Width:</label>
      <Size $focus $w={25}><input id="width" defaultValue="1920" />px</Size>
      <Percent aria-label="Width percent" defaultValue="251.0" />
      <PercentSign>%</PercentSign>
      <span />
      <LinkButton aria-label="Constrain proportions"><Icon name="link" size={14} /></LinkButton>
      <Source>of source</Source>
      <label htmlFor="height">Height:</label>
      <Size $w={13}><input id="height" defaultValue="77" />px</Size>
      <Percent aria-label="Height percent" defaultValue="100.0" />
      <PercentSign>%</PercentSign>
    </Fields>
    <Picks>
      <label htmlFor="units">Units:</label>
      <SelectBox>
        <select id="units"><option>pixels</option></select>
        <Icon name="chevron" size={10} />
      </SelectBox>
      <label htmlFor="preserve">Preserve:</label>
      <SelectBox>
        <select id="preserve"><option>None</option></select>
        <Icon name="chevron" size={10} />
      </SelectBox>
    </Picks>
    <Actions>
      <PreviewCheck><input type="checkbox" defaultChecked />Preview</PreviewCheck>
      <PillButton $primary>OK</PillButton>
      <PillButton>Cancel</PillButton>
    </Actions>
  </DialogBox>
);

const App = () => {
  return (
    <Page>
      <GlobalStyle />
      <TitleBar>
        <Logo>Ae</Logo>
        <span>Adobe After Effects 2021 - Untitled Project.aep *</span>
      </TitleBar>
      <MenuBar>{menus.map((m) => <button key={m}>{m}</button>)}</MenuBar>
      <Tools />
      <Workspace>
        <Project />
        <Composition />
      </Workspace>
      <TimelinePanel />
      <ScaleDialog />
    </Page>
  );
};

export default App;
